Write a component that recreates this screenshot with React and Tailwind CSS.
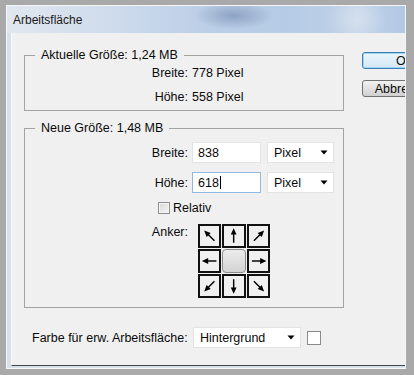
import React from "react";

const FONT = { fontFamily: '"Liberation Sans", Arial, sans-serif' };

// small black arrow for the anchor grid, rotated per cell
const Arrow = ({ angle }) => (
  <svg width="20" height="20" viewBox="0 0 20 20">
    <g transform={`rotate(${angle} 10 10)`}>
      <line x1="10" y1="17" x2="10" y2="6" stroke="#000" strokeWidth="1.5" />
      <path d="M10 2 L7 8.5 L13 8.5 Z" fill="#000" />
    </g>
  </svg>
);

const DropArrow = () => (
  <svg width="8" height="5" viewBox="0 0 8 5" className="shrink-0">
    <path d="M0.5 0.5 L7.5 0.5 L4 4.5 Z" fill="#000" />
  </svg>
);

const Select = ({ value, className }) => (
  <div
    className={`h-[21px] bg-white border border-[#e3e3e3] flex items-center justify-between pl-[6px] pr-[5px] ${className}`}
  >
    <span>{value}</span>
    <DropArrow />
  </div>
);

const anchors = [-45, 0, 45, -90, null, 90, -135, 180, 135];

export default function App() {
  return (
    <div
      className="w-[414px] h-[375px] bg-[#a9a9a9] pt-[5px] pl-[6px] pr-[8px] pb-[6px] text-[12.5px] leading-[14px] text-[#0a0a0a]"
      style={FONT}
    >
      <div className="h-full border border-[#f6f6f6] bg-[#d8e0ea] flex flex-col overflow-hidden">
        {/* Title bar */}
        <div className="h-[27px] shrink-0 flex items-center pl-[6px] bg-[image:radial-gradient(ellipse_40px_14px_at_57%_35%,#8ea2c4_0%,rgba(142,162,196,0)_100%),radial-gradient(ellipse_30px_30px_at_88%_50%,#d4e0ee_0%,rgba(212,224,238,0)_100%),linear-gradient(90deg,#e1e7ef_0%,#cfdcec_25%,#bccfe7_50%,#b6cbe5_70%,#bfd1e8_88%,#b3c8e3_100%)]">
          <span className="text-[12px] text-[#1a1a1a]">Arbeitsfläche</span>
        </div>

        {/* Body */}
        <div className="flex-1 ml-[4px] mb-[2px] border-l border-[#fbfbfb] border-b border-b-[#3c4650] bg-[#f0f0f0] overflow-hidden flex">
          <div className="w-[320px] shrink-0 ml-[12px] mt-[15px] flex flex-col">
            {/* Aktuelle Größe */}
            <fieldset className="border border-[#a3a3a3] pb-[3px]">
              <legend className="ml-[10px] px-[6px] leading-[14px]">Aktuelle Größe: 1,24 MB</legend>
              <div className="flex h-[20px] items-center mt-[1px]">
                <span className="w-[163px] text-right">Breite:</span>
                <span className="ml-[4px]">778 Pixel</span>
              </div>
              <div className="flex h-[20px] items-center mt-[4px]">
                <span className="w-[163px] text-right">Höhe:</span>
                <span className="ml-[4px]">558 Pixel</span>
              </div>
            </fieldset>

            {/* Neue Größe */}
            <fieldset className="border border-[#a3a3a3] mt-[10px] pb-[9px]">
              <legend className="ml-[10px] px-[6px] leading-[14px]">Neue Größe: 1,48 MB</legend>
              <div className="flex h-[21px] items-center mt-[7px]">
                <span className="w-[163px] text-right">Breite:</span>
                <div className="ml-[4px] w-[69px] h-[21px] bg-white border border-[#e3e3e3] flex items-center pl-[5px]">
                  838
                </div>
                <Select value="Pixel" className="ml-[6px] w-[67px]" />
              </div>
              <div className="flex h-[21px] items-center mt-[9px]">
                <span className="w-[163px] text-right">Höhe:</span>
                <div className="ml-[4px] w-[69px] h-[21px] bg-white border border-[#8fb9e3] flex items-center pl-[5px]">
                  618
                  <span className="w-px h-[13px] bg-black ml-px" />
                </div>
                <Select value="Pixel" className="ml-[6px] w-[67px]" />
              </div>
              <div className="flex h-[14px] items-center mt-[8px] pl-[133px]">
                <span className="w-[12px] h-[12px] border border-[#8e8f8f] bg-linear-to-br from-[#d9d9d9] to-[#f7f7f7] shadow-[inset_0_0_0_1px_#f4f4f4]" />
                <span className="ml-[3px]">Relativ</span>
              </div>
              <div className="flex mt-[9px]">
                <span className="w-[163px] text-right pt-[1px]">Anker:</span>
                <div className="ml-[10px] w-[72px] h-[74px] grid grid-cols-3 grid-rows-3 gap-px">
                  {anchors.map((a, i) =>
                    a === null ? (
                      <div
                        key={i}
                        className="rounded-[4px] border border-[#8a8a8a] bg-linear-to-b from-[#ececec] to-[#d3d3d3]"
                      />
                    ) : (
                      <div
                        key={i}
                        className="border-2 border-[#111] bg-[#f0f0f0] flex items-center justify-center"
                      >
                        <Arrow angle={a} />
                      </div>
                    )
                  )}
                </div>
              </div>
            </fieldset>

            {/* Footer */}
            <div className="flex items-center mt-[19px] pl-[8px]">
              <span className="w-[161px] shrink-0 whitespace-nowrap">Farbe für erw. Arbeitsfläche:</span>
              <Select value="Hintergrund" className="w-[108px]" />
              <span className="ml-[6px] w-[14px] h-[14px] bg-white border border-[#8a8a8a]" />
            </div>
          </div>

          {/* Buttons */}
          <div className="ml-[18px] mt-[19px] flex flex-col shrink-0">
            <button className="w-[86px] h-[17px] rounded-[3px] border border-[#3c7fb1] bg-linear-to-b from-[#eaf6fd] to-[#d5e8f4] shadow-[inset_0_0_0_1px_#9fd6f5] flex items-center justify-center leading-[14px]">
              OK
            </button>
            <button className="mt-[11px] w-[86px] h-[17px] rounded-[3px] border border-[#707070] bg-linear-to-b from-[#f2f2f2] to-[#d0d0d0] flex items-center justify-center leading-[14px]">
              Abbrechen
            </button>
          </div>
        </div>
      </div>
    </div>
  );
}
